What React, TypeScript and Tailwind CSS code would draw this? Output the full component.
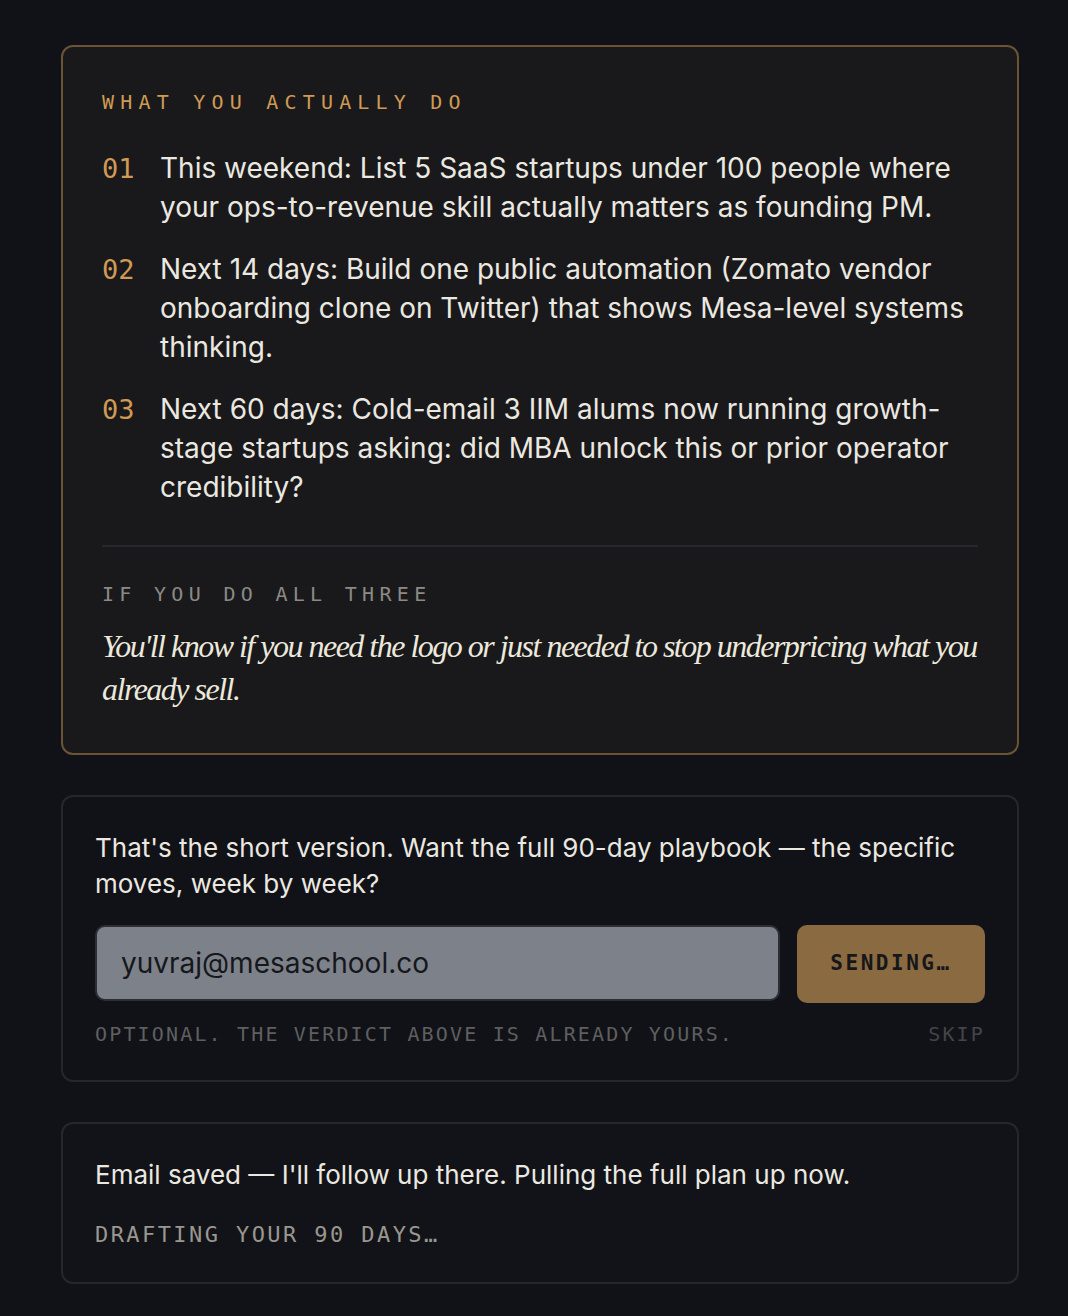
import React from 'react';

const mono = "font-['DejaVu_Sans_Mono','Liberation_Mono',monospace]";
const sans = "font-['Inter','Noto_Sans',sans-serif]";

const steps = [
  {
    n: '01',
    text: 'This weekend: List 5 SaaS startups under 100 people where your ops-to-revenue skill actually matters as founding PM.',
  },
  {
    n: '02',
    text: 'Next 14 days: Build one public automation (Zomato vendor onboarding clone on Twitter) that shows Mesa-level systems thinking.',
  },
  {
    n: '03',
    text: 'Next 60 days: Cold-email 3 IIM alums now running growth-stage startups asking: did MBA unlock this or prior operator credibility?',
  },
];

const App: React.FC = () => {
  return (
    <div className={`min-h-[1316px] bg-[#111217] pt-[45px] pb-[33px] pl-[61px] pr-[49px] ${sans}`}>
      <div className="flex flex-col gap-[40px]">
        {/* plan card */}
        <div className="rounded-[12px] border-2 border-[#6b5434] bg-[#19191b] px-[39px] pt-[40px] pb-[42px]">
          <div className={`${mono} text-[20px] leading-[30px] tracking-[0.31em] text-[#d09a54]`}>
            WHAT YOU ACTUALLY DO
          </div>
          <div className="mt-[32px] flex flex-col gap-[23px]">
            {steps.map((s) => (
              <div key={s.n} className="flex">
                <div className={`${mono} w-[58px] shrink-0 text-[27px] leading-[39px] text-[#d09a54]`}>{s.n}</div>
                <div className="text-[28px] leading-[39px] text-[#ebe8e0]">{s.text}</div>
              </div>
            ))}
          </div>
          <div className="mt-[38px] h-[2px] bg-[#27282b]" />
          <div className={`${mono} mt-[32px] text-[20px] leading-[30px] tracking-[0.265em] text-[#8b8a85]`}>
            IF YOU DO ALL THREE
          </div>
          <p className="mt-[16px] font-['Liberation_Serif',serif] text-[32px] italic leading-[43px] tracking-[-0.047em] text-[#ece8dc]">
            You'll know if you need the logo or just needed to stop underpricing what you already sell.
          </p>
        </div>

        {/* email card */}
        <div className="rounded-[12px] border-2 border-[#25272c] bg-[#111217] px-[32px] pt-[33px] pb-[31px]">
          <p className="text-[26px] leading-[36px] text-[#ebe8e0]">
            That's the short version. Want the full 90-day playbook — the specific moves, week by week?
          </p>
          <div className="mt-[23px] flex gap-[17px]">
            <div className="flex h-[76px] flex-1 items-center rounded-[10px] border-2 border-[#2b2e35] bg-[#7d818a] px-[24px] text-[28px] text-[#16171b]">
              yuvraj@mesaschool.co
            </div>
            <div className={`${mono} flex h-[78px] w-[188px] items-center justify-center rounded-[10px] bg-[#8a6a40] text-[21px] font-bold tracking-[0.12em] text-[#17171a]`}>
              SENDING…
            </div>
          </div>
          <div className={`${mono} mt-[16px] flex justify-between text-[20px] leading-[30px] tracking-[0.108em]`}>
            <span className="text-[#5f5f60]">OPTIONAL. THE VERDICT ABOVE IS ALREADY YOURS.</span>
            <span className="text-[#434448]">SKIP</span>
          </div>
        </div>

        {/* status card */}
        <div className="rounded-[12px] border-2 border-[#25272c] bg-[#121318] px-[32px] pt-[33px] pb-[31px]">
          <p className="text-[26px] leading-[36px] text-[#ebe8e0]">
            Email saved — I'll follow up there. Pulling the full plan up now.
          </p>
          <div className={`${mono} mt-[25px] text-[22px] leading-[33px] tracking-[0.11em] text-[#9a978f]`}>
            DRAFTING YOUR 90 DAYS…
          </div>
        </div>
      </div>
    </div>
  );
};

export default App;
